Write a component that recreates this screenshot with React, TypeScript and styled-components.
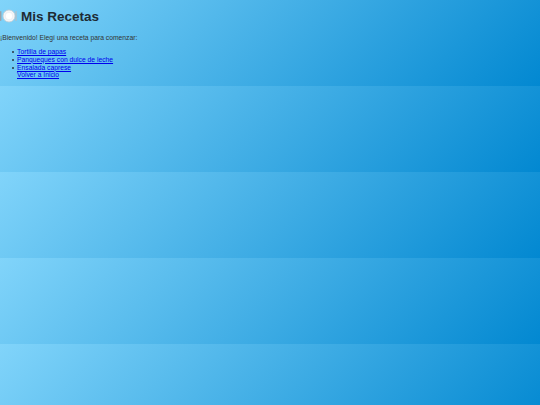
import React from 'react'
import styled, { createGlobalStyle } from 'styled-components'

// la captura original estaba a ~0.42x, por eso los tamaños chicos

const GlobalStyle = createGlobalStyle`
  body {
    margin: 0;
    font-family: 'Liberation Sans', Arial, sans-serif;
    font-size: 6.75px;
    line-height: 7.76px;
    color: #333;
    background: linear-gradient(135deg, #81d4fa, #0288d1);
  }
`

const Header = styled.header`
  display: block;
`

const Title = styled.h1`
  margin: 9px 0;
  font-size: 13.5px;
  line-height: 15.5px;
  font-weight: bold;
  color: #1e2a33;
`

const Logo = styled.svg`
  vertical-align: middle;
  margin-right: 4px;
  margin-top: -2px;
`

const Intro = styled.p`
  margin: 6.75px 0;
`

const RecipeList = styled.ul`
  margin: 6.75px 0;
  padding-left: 17px;
  list-style: none;
`

const Item = styled.li<{ plain?: boolean }>`
  &::before {
    content: '';
    display: inline-block;
    width: 2px;
    height: 2px;
    border-radius: 50%;
    background: #2a3440;
    margin-left: -5.5px;
    margin-right: 3.5px;
    vertical-align: middle;
    ${(props) => props.plain && 'visibility: hidden;'}
  }
`

const Link = styled.a`
  color: #0000ee;
  text-decoration: underline;
`

const recetas = ['Tortilla de papas', 'Panqueques con dulce de leche', 'Ensalada caprese']

const PlateIcon = () => (
  <Logo width="17" height="14" viewBox="0 0 17 14">
    <rect x="0" y="2" width="1.4" height="10" rx="0.7" fill="#9aa3ab" />
    <circle cx="9" cy="7" r="6" fill="#f4f6f8" stroke="#c5ccd2" strokeWidth="0.8" />
    <circle cx="9" cy="7" r="3.8" fill="#ffffff" stroke="#e1e5e9" strokeWidth="0.5" />
    <rect x="15.4" y="2" width="1.2" height="10" rx="0.6" fill="#b4bcc3" />
  </Logo>
)

const App = () => {
  return (
    <>
      <GlobalStyle />
      <Header>
        <Title>
          <PlateIcon />
          Mis Recetas
        </Title>
      </Header>
      <Intro>¡Bienvenido! Elegí una receta para comenzar:</Intro>
      <RecipeList>
        {recetas.map((r, index) => (
          <Item key={index}>
            <Link href="#">{r}</Link>
          </Item>
        ))}
        <Item plain>
          <Link href="#">Volver a Inicio</Link>
        </Item>
      </RecipeList>
    </>
  )
}

export default App
